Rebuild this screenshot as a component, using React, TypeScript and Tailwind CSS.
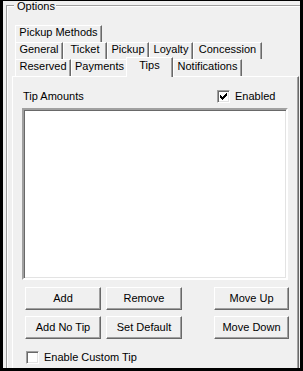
import React from "react";

const tabBase =
  "h-[17px] flex justify-center items-start border-l border-t border-r border-l-white border-t-white border-r-[#696969] shadow-[inset_-1px_0_0_#a0a0a0] bg-[#f0f0f0] whitespace-nowrap";

function Tab({ label, w }: { label: string; w: string }) {
  return <div className={`${tabBase} ${w}`}>{label}</div>;
}

function Btn({ label, w }: { label: string; w: string }) {
  return (
    <div
      className={`h-[23px] ${w} flex items-center justify-center bg-[#f0f0f0] border border-t-white border-l-white border-r-[#696969] border-b-[#696969] shadow-[inset_-1px_-1px_0_#a0a0a0] whitespace-nowrap`}
    >
      {label}
    </div>
  );
}

function Check({ checked }: { checked?: boolean }) {
  return (
    <div className="w-[13px] h-[13px] shrink-0 bg-white border border-t-[#a0a0a0] border-l-[#a0a0a0] border-r-white border-b-white shadow-[inset_1px_1px_0_#696969,inset_-1px_-1px_0_#e3e3e3] flex items-center justify-center">
      {checked && (
        <svg width="7" height="7" viewBox="0 0 7 7" shapeRendering="crispEdges">
          <path
            fill="#000"
            d="M6 0h1v1h-1z M5 1h2v1h-2z M0 2h1v1h-1z M4 2h3v1h-3z M0 3h2v1h-2z M3 3h3v1h-3z M0 4h5v1h-5z M1 5h3v1h-3z M2 6h1v1h-1z"
          />
        </svg>
      )}
    </div>
  );
}

export default function App() {
  return (
    <div className="w-[303px] h-[371px] bg-black pl-[3px] pt-[1px] pr-[3px] pb-[3px] flex">
      <div className="flex-1 bg-[#f0f0f0] overflow-hidden flex flex-col text-[11px] leading-[13px] text-black font-['Liberation_Sans',Arial,sans-serif]">
        <div className="ml-[3px] mt-[4px] flex-1 flex flex-col border-l border-t border-[#a0a0a0] shadow-[inset_1px_1px_0_#ffffff]">
          <div className="flex h-[7px]">
            <span className="-mt-[6px] ml-[7px] pl-[3px] pr-[1px] h-[13px] bg-[#f0f0f0]">Options</span>
          </div>

          <div className="mt-[12px] ml-[5px] mr-[1px] flex-1 flex flex-col">
            <div className="pl-[3px] flex flex-col">
              <div className="flex h-[17px]">
                <Tab label="Pickup Methods" w="w-[87px]" />
              </div>
              <div className="flex h-[17px]">
                <Tab label="General" w="w-[48px]" />
                <Tab label="Ticket" w="w-[44px]" />
                <Tab label="Pickup" w="w-[42px]" />
                <Tab label="Loyalty" w="w-[44px]" />
                <Tab label="Concession" w="w-[69px]" />
              </div>
              <div className="flex h-[17px] items-end">
                <Tab label="Reserved" w="w-[56px]" />
                <Tab label="Payments" w="w-[57px]" />
                <div className="relative z-10 -ml-[2px] w-[47px] h-[20px] -mb-[1px] pt-[1px] flex justify-center items-start border-l border-t border-r border-l-white border-t-white border-r-[#696969] shadow-[inset_-1px_0_0_#a0a0a0] bg-[#f0f0f0]">
                  Tips
                </div>
                <Tab label="Notifications" w="w-[69px]" />
              </div>
            </div>

            <div className="flex-1 flex flex-col border-l border-t border-r border-l-white border-t-white border-r-[#696969] shadow-[inset_-1px_0_0_#a0a0a0] pl-[9px] pt-[13px]">
              <div className="flex items-center h-[13px]">
                <span className="w-[195px] pl-[1px]">Tip Amounts</span>
                <Check checked />
                <span className="ml-[5px]">Enabled</span>
              </div>

              <div className="mt-[5px] w-[266px] h-[172px] bg-white border-2 border-t-[#a0a0a0] border-l-[#a0a0a0] border-r-white border-b-white shadow-[inset_1px_1px_0_#696969,inset_-1px_-1px_0_#e3e3e3]" />

              <div className="mt-[7px] pl-[3px] flex">
                <Btn label="Add" w="w-[76px]" />
                <div className="ml-[5px]">
                  <Btn label="Remove" w="w-[76px]" />
                </div>
                <div className="ml-[32px]">
                  <Btn label="Move Up" w="w-[75px]" />
                </div>
              </div>
              <div className="mt-[6px] pl-[3px] flex">
                <Btn label="Add No Tip" w="w-[76px]" />
                <div className="ml-[5px]">
                  <Btn label="Set Default" w="w-[76px]" />
                </div>
                <div className="ml-[32px]">
                  <Btn label="Move Down" w="w-[75px]" />
                </div>
              </div>

              <div className="mt-[12px] pl-[4px] flex items-center h-[13px]">
                <Check />
                <span className="ml-[5px]">Enable Custom Tip</span>
              </div>
            </div>
          </div>
        </div>
      </div>
    </div>
  );
}
